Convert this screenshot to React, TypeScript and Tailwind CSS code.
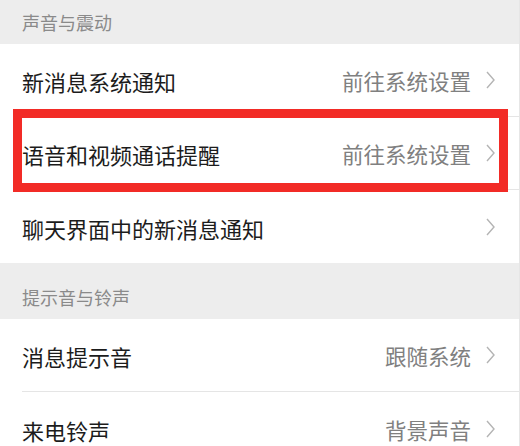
type Row = { title: string; value?: string }

const soundRows: Row[] = [
  { title: '新消息系统通知', value: '前往系统设置' },
  { title: '语音和视频通话提醒', value: '前往系统设置' },
  { title: '聊天界面中的新消息通知' },
]

const ringRows: Row[] = [
  { title: '消息提示音', value: '跟随系统' },
  { title: '来电铃声', value: '背景声音' },
]

function Chevron() {
  return (
    <svg width="9" height="18" viewBox="0 0 9 18" fill="none" className="shrink-0">
      <polyline points="1,1 8,9 1,17" stroke="#b4b4b4" strokeWidth="1.4" strokeLinejoin="miter" />
    </svg>
  )
}

function SectionHeader({ label, tall }: { label: string; tall?: boolean }) {
  return (
    <div
      className={`flex items-end bg-[#ededed] px-[22px] pb-[13px] ${tall ? 'h-[56px]' : 'h-[44px]'}`}
    >
      <span className="text-[18px] leading-[18px] text-[#8a8a8a]">{label}</span>
    </div>
  )
}

function SettingRow({ row, divider }: { row: Row; divider: boolean }) {
  return (
    <div className="bg-white pl-[22px]">
      <div
        className={`flex h-[73px] items-center pr-[24px] ${divider ? 'border-b border-[#e5e5e5]' : ''}`}
      >
        <span className="flex-1 pt-[2px] text-[22px] leading-none text-[#1c1c1c]">{row.title}</span>
        {row.value && (
          <span className="mr-[15px] pt-[2px] text-[21.5px] leading-none text-[#808080]">{row.value}</span>
        )}
        <Chevron />
      </div>
    </div>
  )
}

export default function App() {
  return (
    <div
      className="relative h-[446px] w-[520px] overflow-hidden border-r border-[#e6e6e6] bg-white"
      style={{ fontFamily: '"Noto Sans CJK SC", "Noto Sans", sans-serif' }}
    >
      <SectionHeader label="声音与震动" />
      {soundRows.map((row, i) => (
        <SettingRow key={row.title} row={row} divider={i < soundRows.length - 1} />
      ))}
      <SectionHeader label="提示音与铃声" tall />
      {ringRows.map((row, i) => (
        <SettingRow key={row.title} row={row} divider={i < ringRows.length - 1} />
      ))}

      {/* red highlight box drawn over the call-reminder row */}
      <div className="pointer-events-none absolute left-[13px] top-[109px] h-[83px] w-[495px] border-[9px] border-[#f22b26]" />
    </div>
  )
}
